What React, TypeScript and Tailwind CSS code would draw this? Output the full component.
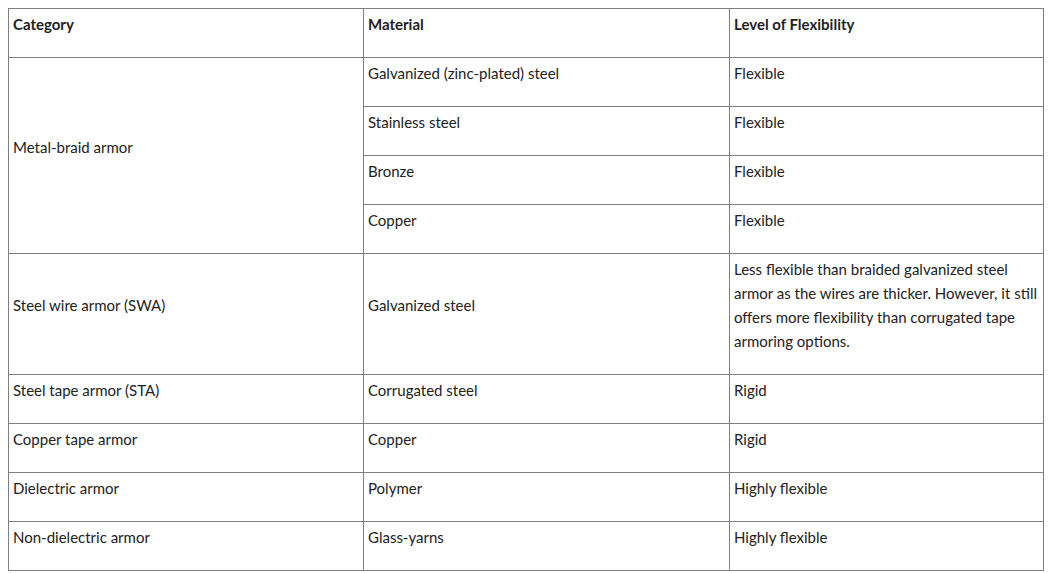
import React from "react";

const cell = "border border-[#7f7f7f] align-top pt-[3px] pb-[21px] pl-[4px] pr-[5px] leading-[24px]";

export default function App() {
  const rows: { cat?: string; span?: number; mat: string; lvl: string }[] = [
    { cat: "Metal-braid armor", span: 4, mat: "Galvanized (zinc-plated) steel", lvl: "Flexible" },
    { mat: "Stainless steel", lvl: "Flexible" },
    { mat: "Bronze", lvl: "Flexible" },
    { mat: "Copper", lvl: "Flexible" },
    {
      cat: "Steel wire armor (SWA)",
      span: 1,
      mat: "Galvanized steel",
      lvl: "Less flexible than braided galvanized steel armor as the wires are thicker. However, it still offers more flexibility than corrugated tape armoring options.",
    },
    { cat: "Steel tape armor (STA)", span: 1, mat: "Corrugated steel", lvl: "Rigid" },
    { cat: "Copper tape armor", span: 1, mat: "Copper", lvl: "Rigid" },
    { cat: "Dielectric armor", span: 1, mat: "Polymer", lvl: "Highly flexible" },
    { cat: "Non-dielectric armor", span: 1, mat: "Glass-yarns", lvl: "Highly flexible" },
  ];
  return (
    <div className="w-[1048px] h-[573px] bg-white pt-[8px] pl-[8px] text-[15px] text-[#222222]" style={{ fontFamily: "Lato, 'Noto Sans', sans-serif" }}>
      <table className="border-collapse table-fixed w-[1035px]">
        <colgroup>
          <col className="w-[355px]" />
          <col className="w-[366px]" />
          <col className="w-[314px]" />
        </colgroup>
        <thead>
          <tr>
            <th className={cell + " text-left font-bold"}>Category</th>
            <th className={cell + " text-left font-bold"}>Material</th>
            <th className={cell + " text-left font-bold"}>Level of Flexibility</th>
          </tr>
        </thead>
        <tbody>
          {rows.map((r, i) => (
            <tr key={i}>
              {r.cat && (
                <td rowSpan={r.span} className={cell.replace("align-top", "align-middle")}>
                  {r.cat}
                </td>
              )}
              <td className={r.cat ? cell.replace("align-top", "align-middle") : cell}>{r.mat}</td>
              <td className={cell}>{r.lvl}</td>
            </tr>
          ))}
        </tbody>
      </table>
    </div>
  );
}
